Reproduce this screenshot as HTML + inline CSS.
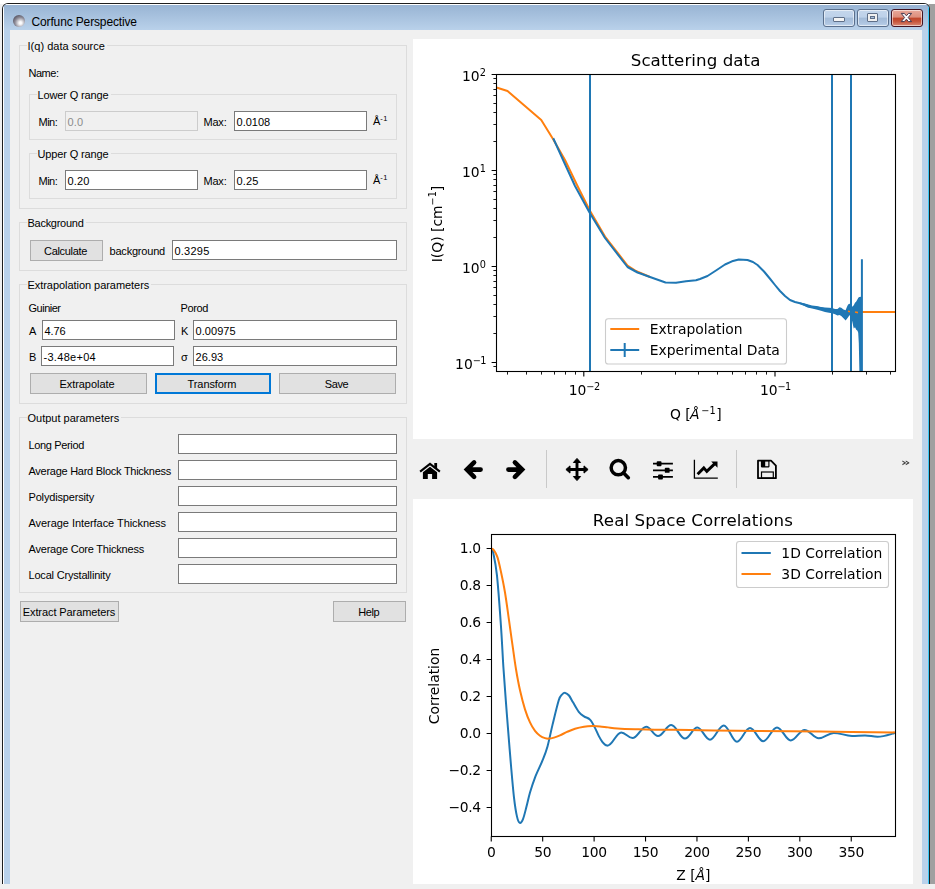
<!DOCTYPE html>
<html><head><meta charset="utf-8"><title>Corfunc Perspective</title><style>
*{box-sizing:border-box;margin:0;padding:0}
html,body{width:935px;height:889px;overflow:hidden;background:#f0f0f0}
body{position:relative;font-family:"Liberation Sans", sans-serif;font-size:11px;color:#000}
.abs{position:absolute}
.t{position:absolute;white-space:nowrap;line-height:13px;height:13px}
.gb{position:absolute;border:1px solid #dcdcdc}
.gbl{position:absolute;background:#f0f0f0;padding:0 2px 0 1px;white-space:nowrap;line-height:13px;height:13px}
.in{position:absolute;background:#fff;border:1px solid #7a7a7a;height:20px;line-height:17px;padding:2px 0 0 1.5px;white-space:nowrap;overflow:hidden}
.in.dis{background:#f0f0f0;border-color:#cccccc;color:#8c8c8c}
.btn{position:absolute;background:#e1e1e1;border:1px solid #adadad;height:21px;white-space:nowrap}
.btn span{position:absolute;top:4px;line-height:13px;white-space:nowrap}
.btn.foc{border:2px solid #0078d7}
.btn.foc span{top:3px}
svg{position:absolute;left:0;top:0}
svg text{font-family:"DejaVu Sans", "Liberation Sans", sans-serif}
</style></head><body>
<div class="abs" style="left:0;top:0;width:935px;height:4px;background:#fff"></div>
<div class="abs" style="left:929px;top:4px;width:6px;height:880px;background:#a0a0a0"></div>
<div class="abs" id="frame" style="left:2px;top:3px;width:928px;height:886px;background:#b9d1ea;border:1px solid #1e1e1e;border-bottom:none;border-radius:6px 6px 0 0;overflow:hidden"><div class="abs" style="left:0;top:0;width:926px;height:26px;background:linear-gradient(#97b3d3,#b9d1ea)"></div><div class="abs" style="left:0;top:0;width:926px;height:1px;background:#fff"></div><div class="abs" style="left:0;top:0;width:1px;height:886px;background:#fff"></div><div class="abs" style="left:925px;top:0;width:1px;height:886px;background:#3cc8f5"></div></div>
<div class="abs" style="left:10px;top:30px;width:912px;height:859px;background:#f0f0f0"></div>
<div class="abs" style="left:0;top:884px;width:935px;height:5px;background:#f0f0f0"></div>
<div class="abs" style="left:13px;top:15px;width:12px;height:12px;border-radius:50%;background:radial-gradient(circle at 62% 66%,#fff 0%,#f6f6f8 13%,#8d8b97 50%,#524f5d 80%,#45424f 100%)"></div>
<div class="t" style="left:31.5px;top:15px;font-size:12px;line-height:15px;height:15px;letter-spacing:-0.139px;">Corfunc Perspective</div>
<div class="abs" style="left:823px;top:9px;width:32px;height:18px;border:1px solid #5a6f8c;border-radius:3px;background:linear-gradient(#c4d6ec 0%,#bdd1e9 45%,#a3bbd8 50%,#adc4e0 80%,#bcd0e8 100%);box-shadow:inset 0 0 0 1px rgba(255,255,255,0.55)"><div class="abs" style="left:9px;top:7px;width:12px;height:5px;background:#f4f4f4;border:1px solid #5f6f88;border-radius:1px"></div></div>
<div class="abs" style="left:857px;top:9px;width:32px;height:18px;border:1px solid #5a6f8c;border-radius:3px;background:linear-gradient(#c4d6ec 0%,#bdd1e9 45%,#a3bbd8 50%,#adc4e0 80%,#bcd0e8 100%);box-shadow:inset 0 0 0 1px rgba(255,255,255,0.55)"><div class="abs" style="left:9px;top:3px;width:11px;height:9px;background:#f0f0f0;border:1px solid #5f6f88;border-radius:1px"></div><div class="abs" style="left:12px;top:6px;width:5px;height:3px;background:#a9c0dc;border:1px solid #5f6f88"></div></div>
<div class="abs" style="left:891px;top:9px;width:32px;height:18px;border:1px solid #431422;border-radius:3px;background:linear-gradient(#e9a99b 0%,#dd8e7c 45%,#c0452b 50%,#c65338 70%,#d98a76 100%);box-shadow:inset 0 0 0 1px rgba(255,255,255,0.55)"><svg width="30" height="16" viewBox="0 0 30 16" style="left:0;top:0"><path transform="translate(14.4 7.5)" d="M-5.2 -4.1H-2.1L0 -1.7L2.1 -4.1H5.2L1.8 0L5.2 4.1H2.1L0 1.7L-2.1 4.1H-5.2L-1.8 0Z" fill="#fff" stroke="#46384f" stroke-width="1" stroke-linejoin="round"/></svg></div>
<div class="gb" style="left:19px;top:45px;width:388px;height:164px"></div>
<div class="gbl" style="left:26.5px;top:40px;letter-spacing:0.028px;">I(q) data source</div>
<div class="t" style="left:28.5px;top:67px;letter-spacing:-0.481px;">Name:</div>
<div class="gb" style="left:29px;top:94px;width:368px;height:46px"></div>
<div class="gbl" style="left:36.5px;top:89px;letter-spacing:-0.136px;">Lower Q range</div>
<div class="t" style="left:38.5px;top:116px;letter-spacing:-0.508px;">Min:</div>
<div class="in dis" style="left:65px;top:111px;width:133px;height:20px;letter-spacing:0.151px;">0.0</div>
<div class="t" style="left:203.5px;top:116px;letter-spacing:-0.211px;">Max:</div>
<div class="in " style="left:234px;top:111px;width:133px;height:20px;letter-spacing:0.016px;">0.0108</div>
<div class="t" style="left:373.0px;top:115px;">&#197;<span style="font-size:7.5px;position:relative;top:-4px;letter-spacing:0.3px">-1</span></div>
<div class="gb" style="left:29px;top:153px;width:368px;height:46px"></div>
<div class="gbl" style="left:36.5px;top:148px;letter-spacing:-0.136px;">Upper Q range</div>
<div class="t" style="left:38.5px;top:175px;letter-spacing:-0.508px;">Min:</div>
<div class="in " style="left:65px;top:170px;width:133px;height:20px;letter-spacing:0.145px;">0.20</div>
<div class="t" style="left:203.5px;top:175px;letter-spacing:-0.211px;">Max:</div>
<div class="in " style="left:234px;top:170px;width:133px;height:20px;letter-spacing:0.145px;">0.25</div>
<div class="t" style="left:373.0px;top:174px;">&#197;<span style="font-size:7.5px;position:relative;top:-4px;letter-spacing:0.3px">-1</span></div>
<div class="gb" style="left:19px;top:222px;width:388px;height:49px"></div>
<div class="gbl" style="left:26.5px;top:217px;letter-spacing:-0.272px;">Background</div>
<div class="btn " style="left:30px;top:240px;width:73px;height:21px"><span style="left:13.00px;letter-spacing:-0.318px;">Calculate</span></div>
<div class="t" style="left:109.5px;top:245px;letter-spacing:-0.200px;">background</div>
<div class="in " style="left:172px;top:240px;width:225px;height:20px;letter-spacing:0.224px;">0.3295</div>
<div class="gb" style="left:19px;top:284px;width:388px;height:120px"></div>
<div class="gbl" style="left:26.5px;top:279px;letter-spacing:-0.048px;">Extrapolation parameters</div>
<div class="t" style="left:28.5px;top:302px;letter-spacing:-0.496px;">Guinier</div>
<div class="t" style="left:180.5px;top:302px;letter-spacing:-0.372px;">Porod</div>
<div class="t" style="left:29.0px;top:325px;">A</div>
<div class="in " style="left:42px;top:320px;width:133px;height:20px;letter-spacing:-0.105px;">4.76</div>
<div class="t" style="left:181.0px;top:325px;">K</div>
<div class="in " style="left:193px;top:320px;width:204px;height:20px;letter-spacing:0.069px;">0.00975</div>
<div class="t" style="left:29.0px;top:351px;">B</div>
<div class="in " style="left:41px;top:346px;width:133px;height:20px;letter-spacing:0.293px;">-3.48e+04</div>
<div class="t" style="left:181.0px;top:351px;">&#963;</div>
<div class="in " style="left:193px;top:346px;width:204px;height:20px;letter-spacing:0.044px;">26.93</div>
<div class="btn " style="left:30px;top:373px;width:117px;height:21px"><span style="left:28.38px;letter-spacing:-0.037px;">Extrapolate</span></div>
<div class="btn foc" style="left:155px;top:373px;width:116px;height:21px"><span style="left:30.62px;letter-spacing:-0.108px;">Transform</span></div>
<div class="btn " style="left:279px;top:373px;width:117px;height:21px"><span style="left:44.75px;letter-spacing:-0.395px;">Save</span></div>
<div class="gb" style="left:19px;top:417px;width:388px;height:176px"></div>
<div class="gbl" style="left:26.5px;top:412px;letter-spacing:0.002px;">Output parameters</div>
<div class="t" style="left:28.5px;top:439px;letter-spacing:-0.348px;">Long Period</div>
<div class="in " style="left:178px;top:434px;width:219px;height:20px;"></div>
<div class="t" style="left:28.5px;top:465px;letter-spacing:-0.268px;">Average Hard Block Thickness</div>
<div class="in " style="left:178px;top:460px;width:219px;height:20px;"></div>
<div class="t" style="left:28.5px;top:491px;letter-spacing:-0.169px;">Polydispersity</div>
<div class="in " style="left:178px;top:486px;width:219px;height:20px;"></div>
<div class="t" style="left:28.5px;top:517px;letter-spacing:-0.056px;">Average Interface Thickness</div>
<div class="in " style="left:178px;top:512px;width:219px;height:20px;"></div>
<div class="t" style="left:28.5px;top:543px;letter-spacing:-0.207px;">Average Core Thickness</div>
<div class="in " style="left:178px;top:538px;width:219px;height:20px;"></div>
<div class="t" style="left:28.5px;top:569px;letter-spacing:-0.189px;">Local Crystallinity</div>
<div class="in " style="left:178px;top:564px;width:219px;height:20px;"></div>
<div class="btn " style="left:20px;top:601px;width:99px;height:21px"><span style="left:1.75px;letter-spacing:-0.091px;">Extract Parameters</span></div>
<div class="btn " style="left:333px;top:601px;width:73px;height:21px"><span style="left:24.20px;letter-spacing:-0.406px;">Help</span></div>
<div class="abs" style="left:413px;top:39px;width:500px;height:400px;background:#fff"></div>
<div class="abs" style="left:413px;top:499px;width:500px;height:385px;background:#fff"></div>
<svg width="935" height="889" viewBox="0 0 935 889" font-size="13.89" fill="#000" style="will-change:transform">
<clipPath id="c1"><rect x="496.50" y="74.50" width="399.00" height="297.00"/></clipPath>
<g clip-path="url(#c1)" fill="none" stroke-linejoin="round" stroke-linecap="butt">
<path d="M496.50 87.50L507.50 91.00L541.25 120.00L553.00 139.00L565.00 160.00L577.00 185.00L589.50 210.00L605.00 236.50L627.50 265.50L636.00 271.00L650.00 277.00" stroke="#ff7f0e" stroke-width="2"/>
<path d="M855 312H896" stroke="#ff7f0e" stroke-width="2"/>
<path d="M553.25 138.25L564.00 162.00L575.00 186.00L589.50 212.50L605.00 238.00L627.50 267.00L637.50 272.50L650.00 277.00L665.50 282.50L676.00 282.75L686.00 281.30L696.00 280.30L700.00 279.00L707.50 276.00L716.00 270.50L725.00 264.50L732.00 261.30L738.75 259.50L747.50 260.00L753.00 262.00L757.50 265.00L764.00 271.50L770.00 278.75L775.00 285.00L780.00 291.00L785.00 296.00L790.00 300.00L795.00 302.00L800.00 303.20L806.00 305.20L810.00 306.75L816.00 307.30L822.00 308.60L828.00 310.00L832.50 310.75" stroke="#1f77b4" stroke-width="2"/>
<path d="M800.00 302.50L804.00 303.20L807.50 304.20L812.00 305.50L816.25 306.10L821.00 307.00L825.00 307.50L829.00 307.85L832.00 307.95L835.00 309.05L837.50 308.90L839.50 307.15L841.25 307.65L843.50 309.55L845.60 310.15L847.00 306.65L848.10 304.55L849.50 303.65L850.90 303.90L852.30 306.65L853.75 305.15L855.00 302.65L856.25 301.40L857.50 299.15L858.20 297.95L858.80 297.35L859.40 297.05L860.90 296.65L860.91 259.15L862.90 259.15L862.90 371.85L860.91 371.85L860.90 371.85L859.40 371.85L858.80 343.35L858.20 332.85L857.50 330.85L856.25 329.85L855.00 327.35L853.75 328.60L852.30 321.85L850.90 316.10L849.50 315.35L848.10 317.35L847.00 318.85L845.60 320.45L843.50 318.25L841.25 316.10L839.50 315.05L837.50 315.45L835.00 314.15L832.00 313.30L829.00 312.75L825.00 311.90L821.00 310.80L816.25 309.40L812.00 308.40L807.50 307.50L804.00 305.80L800.00 304.00Z" fill="#1f77b4" stroke="none"/>
<path d="M848 311.2L852 312M855 312L858 312.6" stroke="#ff7f0e" stroke-width="1.6"/>
<path d="M590.00 74.5V371.5" stroke="#1f77b4" stroke-width="2"/>
<path d="M832.00 74.5V371.5" stroke="#1f77b4" stroke-width="2"/>
<path d="M851.00 74.5V371.5" stroke="#1f77b4" stroke-width="2"/>
</g>
<rect x="496.50" y="74.50" width="399.00" height="297.00" fill="none" stroke="#000" stroke-width="1.1"/>
<path d="M583.80 371.50v4.9M775.00 371.50v4.9M496.50 74.50h-4.9M496.50 170.50h-4.9M496.50 266.50h-4.9M496.50 362.50h-4.9" stroke="#000" stroke-width="1.1" fill="none"/>
<path d="M507.5 371.50v3.1M526.5 371.50v3.1M541.5 371.50v3.1M554.5 371.50v3.1M565.5 371.50v3.1M575.5 371.50v3.1M641.5 371.50v3.1M675.5 371.50v3.1M698.5 371.50v3.1M717.5 371.50v3.1M732.5 371.50v3.1M745.5 371.50v3.1M756.5 371.50v3.1M766.5 371.50v3.1M832.5 371.50v3.1M866.5 371.50v3.1M890.5 371.50v3.1M496.50 366.5h-3.1M496.50 333.5h-3.1M496.50 316.5h-3.1M496.50 304.5h-3.1M496.50 295.5h-3.1M496.50 287.5h-3.1M496.50 281.5h-3.1M496.50 275.5h-3.1M496.50 270.5h-3.1M496.50 237.5h-3.1M496.50 220.5h-3.1M496.50 208.5h-3.1M496.50 199.5h-3.1M496.50 191.5h-3.1M496.50 185.5h-3.1M496.50 179.5h-3.1M496.50 174.5h-3.1M496.50 141.5h-3.1M496.50 124.5h-3.1M496.50 112.5h-3.1M496.50 103.5h-3.1M496.50 95.5h-3.1M496.50 89.5h-3.1M496.50 83.5h-3.1M496.50 78.5h-3.1" stroke="#000" stroke-width="1" stroke-opacity="0.9" fill="none"/>
<text x="485.9" y="81.00" text-anchor="end">10<tspan dy="-4.9" font-size="9.72">2</tspan></text>
<text x="485.9" y="177.00" text-anchor="end">10<tspan dy="-4.9" font-size="9.72">1</tspan></text>
<text x="485.9" y="273.00" text-anchor="end">10<tspan dy="-4.9" font-size="9.72">0</tspan></text>
<text x="485.9" y="369.00" text-anchor="end">10<tspan dy="-4.9" font-size="9.72" letter-spacing="-0.6">&#8722;1</tspan></text>
<text x="584.10" y="395.1" text-anchor="middle">10<tspan dy="-4.9" font-size="9.72" letter-spacing="-0.6">&#8722;2</tspan></text>
<text x="775.30" y="395.1" text-anchor="middle">10<tspan dy="-4.9" font-size="9.72" letter-spacing="-0.6">&#8722;1</tspan></text>
<text x="695.6" y="66.2" text-anchor="middle" font-size="16.67" letter-spacing="0.07">Scattering data</text>
<text x="695.8" y="419.2" text-anchor="middle">Q [<tspan font-style="italic" dx="-0.7">&#197;</tspan><tspan dy="-5.3" dx="1.7" font-size="9.72">&#8722;1</tspan><tspan dy="5.3" dx="0.6">]</tspan></text>
<text transform="translate(441.5 224) rotate(-90)" text-anchor="middle">I(Q) [cm<tspan dy="-5.3" font-size="9.72">&#8722;1</tspan><tspan dy="5.3">]</tspan></text>
<rect x="605.5" y="318.8" width="181" height="45.2" rx="2.8" fill="#fff" fill-opacity="0.8" stroke="#ccc" stroke-width="1.1"/>
<path d="M610.3 329H639.2" stroke="#ff7f0e" stroke-width="2"/>
<path d="M610.3 350H639.2M624.7 343V357" stroke="#1f77b4" stroke-width="2" fill="none"/>
<text x="649.8" y="334">Extrapolation</text>
<text x="649.8" y="355">Experimental Data</text>
<clipPath id="c2"><rect x="491.50" y="534.50" width="404.00" height="302.00"/></clipPath>
<g clip-path="url(#c2)" fill="none" stroke-linejoin="round">
<path d="M491.25 548.50C491.54 549.07 492.06 547.50 493.00 551.91C493.94 556.32 495.58 562.77 496.90 574.97C498.22 587.17 499.82 609.73 500.90 625.11C501.98 640.48 502.58 654.69 503.40 667.22C504.22 679.75 505.02 689.87 505.80 700.31C506.58 710.76 507.23 719.03 508.10 729.89C508.97 740.75 510.02 754.21 511.00 765.49C511.98 776.77 513.00 789.05 514.00 797.57C515.00 806.10 516.03 812.40 517.00 816.62C517.97 820.85 518.80 822.52 519.80 822.94C520.80 823.36 521.88 821.86 523.00 819.13C524.12 816.41 525.33 811.03 526.50 806.60C527.67 802.17 528.58 797.41 530.00 792.56C531.42 787.71 532.92 782.87 535.00 777.52C537.08 772.17 540.42 765.65 542.50 760.47C544.58 755.29 545.83 752.37 547.50 746.43C549.17 740.50 550.62 732.56 552.50 724.88C554.38 717.19 557.17 705.36 558.75 700.31C560.33 695.26 560.91 695.83 562.00 694.59C563.09 693.36 564.13 692.74 565.30 692.89C566.47 693.04 567.72 693.93 569.00 695.50C570.28 697.07 571.38 699.59 573.00 702.32C574.62 705.04 576.92 709.50 578.75 711.84C580.58 714.18 582.12 715.05 584.00 716.35C585.88 717.66 588.17 717.74 590.00 719.66C591.83 721.58 593.50 725.09 595.00 727.88C596.50 730.68 597.75 734.03 599.00 736.41C600.25 738.78 601.45 740.72 602.50 742.12C603.55 743.53 604.47 744.25 605.30 744.83C606.13 745.42 607.13 745.50 607.50 745.63C612.59 745.63 616.16 732.40 621.25 732.40C625.41 732.40 628.34 738.01 632.50 738.01C637.59 738.01 641.16 726.68 646.25 726.68C650.60 726.68 653.65 736.11 658.00 736.11C662.90 736.11 666.35 725.08 671.25 725.08C676.34 725.08 679.91 738.61 685.00 738.61C689.55 738.61 692.75 727.58 697.30 727.58C702.00 727.58 705.30 739.72 710.00 739.72C715.09 739.72 718.66 725.38 723.75 725.38C728.65 725.38 732.10 741.72 737.00 741.72C741.81 741.72 745.19 727.99 750.00 727.99C754.90 727.99 758.35 741.22 763.25 741.22C768.34 741.22 771.91 727.38 777.00 727.38C782.09 727.38 785.66 740.42 790.75 740.42C795.84 740.42 799.41 729.89 804.50 729.89C809.77 729.89 813.48 738.21 818.75 738.21C824.30 738.21 828.20 732.90 833.75 732.90C840.50 732.90 845.25 735.91 852.00 735.91C856.81 735.91 860.19 735.41 865.00 735.41C869.62 735.41 872.88 736.71 877.50 736.71C884.00 736.71 890.00 734.30 895.50 732.90" stroke="#1f77b4" stroke-width="2"/>
<path d="M491.25 548.50C491.71 548.82 492.96 548.92 494.00 550.41C495.04 551.89 496.33 553.83 497.50 557.42C498.67 561.02 499.75 566.11 501.00 571.96C502.25 577.81 503.67 584.50 505.00 592.52C506.33 600.54 507.75 611.32 509.00 620.09C510.25 628.87 511.33 636.97 512.50 645.16C513.67 653.35 514.75 661.71 516.00 669.23C517.25 676.75 518.50 683.60 520.00 690.28C521.50 696.97 523.33 703.99 525.00 709.33C526.67 714.68 528.33 718.78 530.00 722.37C531.67 725.96 533.33 728.67 535.00 730.89C536.67 733.12 538.33 734.50 540.00 735.71C541.67 736.91 543.54 737.63 545.00 738.11C546.46 738.60 547.25 738.70 548.75 738.61C550.25 738.53 552.12 738.15 554.00 737.61C555.88 737.08 557.83 736.36 560.00 735.41C562.17 734.45 564.50 733.02 567.00 731.90C569.50 730.78 572.17 729.56 575.00 728.69C577.83 727.82 581.08 727.12 584.00 726.68C586.92 726.25 589.83 726.13 592.50 726.08C595.17 726.03 597.42 726.16 600.00 726.38C602.58 726.60 605.08 727.05 608.00 727.38C610.92 727.72 613.00 728.09 617.50 728.39C622.00 728.69 628.75 728.97 635.00 729.19C641.25 729.41 645.83 729.56 655.00 729.69C664.17 729.82 680.21 729.87 690.00 729.99C699.79 730.11 702.08 730.24 713.75 730.39C725.42 730.54 742.29 730.69 760.00 730.89C777.71 731.09 797.42 731.34 820.00 731.59C842.58 731.85 882.92 732.26 895.50 732.40" stroke="#ff7f0e" stroke-width="2"/>
</g>
<rect x="491.50" y="534.50" width="404.00" height="302.00" fill="none" stroke="#000" stroke-width="1.1"/>
<text x="491.25" y="857" text-anchor="middle" letter-spacing="-0.3">0</text>
<text x="542.68" y="857" text-anchor="middle" letter-spacing="-0.3">50</text>
<text x="594.11" y="857" text-anchor="middle" letter-spacing="-0.3">100</text>
<text x="645.54" y="857" text-anchor="middle" letter-spacing="-0.3">150</text>
<text x="696.96" y="857" text-anchor="middle" letter-spacing="-0.3">200</text>
<text x="748.39" y="857" text-anchor="middle" letter-spacing="-0.3">250</text>
<text x="799.82" y="857" text-anchor="middle" letter-spacing="-0.3">300</text>
<text x="851.25" y="857" text-anchor="middle" letter-spacing="-0.3">350</text>
<text x="480.7" y="553.40" text-anchor="end" letter-spacing="-0.35">1.0</text>
<text x="480.7" y="590.40" text-anchor="end" letter-spacing="-0.35">0.8</text>
<text x="480.7" y="627.40" text-anchor="end" letter-spacing="-0.35">0.6</text>
<text x="480.7" y="664.40" text-anchor="end" letter-spacing="-0.35">0.4</text>
<text x="480.7" y="701.40" text-anchor="end" letter-spacing="-0.35">0.2</text>
<text x="480.7" y="738.40" text-anchor="end" letter-spacing="-0.35">0.0</text>
<text x="480.7" y="775.40" text-anchor="end" letter-spacing="-0.35">&#8722;0.2</text>
<text x="480.7" y="812.40" text-anchor="end" letter-spacing="-0.35">&#8722;0.4</text>
<path d="M491.25 836.50v4.9M542.68 836.50v4.9M594.11 836.50v4.9M645.54 836.50v4.9M696.96 836.50v4.9M748.39 836.50v4.9M799.82 836.50v4.9M851.25 836.50v4.9M491.50 548.50h-4.9M491.50 585.50h-4.9M491.50 622.50h-4.9M491.50 659.50h-4.9M491.50 696.50h-4.9M491.50 733.50h-4.9M491.50 770.50h-4.9M491.50 807.50h-4.9" stroke="#000" stroke-width="1.1" fill="none"/>
<text x="692.9" y="526.2" text-anchor="middle" font-size="16.67" letter-spacing="0.1">Real Space Correlations</text>
<text x="693.4" y="880" text-anchor="middle">Z [<tspan font-style="italic">&#197;</tspan>]</text>
<text transform="translate(439 686) rotate(-90)" text-anchor="middle">Correlation</text>
<rect x="736.5" y="541.5" width="152" height="46" rx="2.8" fill="#fff" fill-opacity="0.8" stroke="#ccc" stroke-width="1.1"/>
<path d="M741.5 553H770.8" stroke="#1f77b4" stroke-width="2"/>
<path d="M741.5 574H770.8" stroke="#ff7f0e" stroke-width="2"/>
<text x="781.3" y="558" letter-spacing="0.05">1D Correlation</text>
<text x="781.3" y="579" letter-spacing="0.05">3D Correlation</text>
<g fill="#000" stroke="none">
<rect x="546" y="450" width="1" height="38" fill="#c9c9c9"/>
<rect x="736" y="450" width="1" height="38" fill="#c9c9c9"/>
<path d="M420.1 471.6L430 463.9L439.9 471.6" fill="none" stroke="#000" stroke-width="2.1" stroke-linecap="butt" stroke-linejoin="miter"/>
<rect x="434.3" y="463" width="2.8" height="5.2"/>
<path d="M430 466.7L437.1 472.2V478.9H432.1V474H427.8V478.9H422.9V472.2Z"/>
<path d="M480.6 469.6H468.2M474.1 462.4L466.9 469.6L474.1 476.8" fill="none" stroke="#000" stroke-width="4.6" stroke-linecap="round" stroke-linejoin="miter"/>
<path d="M508.4 469.6H520.8M514.9 462.4L522.1 469.6L514.9 476.8" fill="none" stroke="#000" stroke-width="4.6" stroke-linecap="round" stroke-linejoin="miter"/>
<path d="M567.5 469.5H586.5M577 460V479" fill="none" stroke="#000" stroke-width="2.9"/>
<path d="M577 458.4L580.6 462.5H573.4ZM577 480.6L580.6 476.5H573.4ZM565.9 469.5L570 465.9V473.1ZM588.1 469.5L584 465.9V473.1Z" stroke="#000" stroke-width="1" stroke-linejoin="round"/>
<circle cx="618.3" cy="467.7" r="7.15" fill="none" stroke="#000" stroke-width="3.5"/>
<path d="M623.6 473L628.3 477.7" stroke="#000" stroke-width="3.6" stroke-linecap="round"/>
<path d="M653 463.7H672.9M653 470.3H672.9M653 476.9H672.9" stroke="#000" stroke-width="1.7"/>
<rect x="656.7" y="461.2" width="4.8" height="5" rx="0.9"/><rect x="664.8" y="467.8" width="4.8" height="5" rx="0.9"/><rect x="658.1" y="474.4" width="4.8" height="5" rx="0.9"/>
<path d="M694.4 459.8V478.1H717.8" fill="none" stroke="#000" stroke-width="1.3"/>
<path d="M697.6 474.2L703.8 467.9L706.8 471.4L714.6 463.9" fill="none" stroke="#000" stroke-width="2.9" stroke-linejoin="miter"/>
<path d="M711.2 461.4H717.5V467.7Z"/>
<path d="M758 460.7H771L775.9 465.6V478.2H758Z" fill="none" stroke="#000" stroke-width="1.8" stroke-linejoin="round"/>
<rect x="760.9" y="460.6" width="8.6" height="6.8" rx="0.8"/><rect x="765.2" y="461.6" width="3.1" height="4.6" fill="#e6e6e6"/>
<rect x="761.5" y="472" width="11.8" height="6.2" fill="none" stroke="#000" stroke-width="1.2"/>
</g>
<text transform="translate(901 465.8) scale(1.27 0.98)" font-size="11.5" font-weight="bold" fill="#404040">&#187;</text>
</svg>
</body></html>
